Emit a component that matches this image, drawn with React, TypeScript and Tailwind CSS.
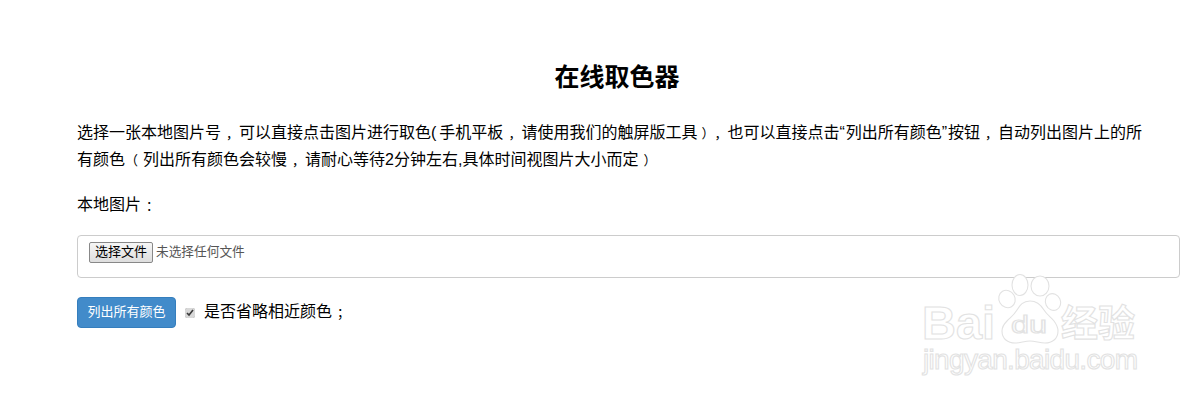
const CJK = "font-['Liberation_Sans','Noto_Sans_CJK_SC',sans-serif]";

// the original's punctuation sits mid-cell, so give each mark its own padded box
function Punct({ children, className }: { children: string; className: string }) {
  return <span className={`inline-block text-[13px] leading-[13px] ${className}`}>{children}</span>;
}

function Comma() {
  return <Punct className="w-[18px] pl-[5px]">，</Punct>;
}

function Watermark() {
  return (
    <svg
      className="absolute left-[900px] top-[260px]"
      width="304"
      height="143"
      viewBox="0 0 304 143"
      fill="#fff"
      stroke="#e2e2e2"
      strokeWidth="1.1"
    >
      <ellipse cx="120" cy="25" rx="8" ry="10.5" />
      <ellipse cx="140" cy="26" rx="9" ry="10" />
      <ellipse cx="107" cy="39" rx="8" ry="9" transform="rotate(-30 107 39)" />
      <ellipse cx="153" cy="42" rx="7.5" ry="8.5" transform="rotate(-25 153 42)" />
      <path d="M130 41c7 0 11 4 14 9 3 5 7 7 10 11 3 4 4 7 4 10 0 8-6 12-13 12-5 0-10-2-15-2s-10 2-15 2c-7 0-13-4-13-12 0-4 2-7 5-10 4-4 7-6 10-11 3-5 6-9 13-9z" />
      <text x="22" y="79" fontSize="47" fontWeight="700" fontFamily="Liberation Sans, sans-serif">Bai</text>
      <text x="111" y="73" fontSize="23" textLength="36" lengthAdjust="spacingAndGlyphs" fontFamily="Liberation Sans, sans-serif">du</text>
      <text x="161" y="77" fontSize="37" fontWeight="700" fontFamily="Noto Sans CJK SC, sans-serif">经验</text>
      <text x="23" y="109" fontSize="28" textLength="215" fontFamily="Liberation Sans, sans-serif">jingyan.baidu.com</text>
    </svg>
  );
}

export default function App() {
  return (
    <div className={`relative h-[403px] w-[1204px] overflow-hidden bg-white pl-[77px] pr-[24px] pt-[60px] text-[16px] text-black ${CJK}`}>
      <h1 className="w-[1080px] text-center text-[25px] leading-[34px] font-bold">在线取色器</h1>
      <p className="mt-[25px] w-[1080px] leading-[27px]">
        选择一张本地图片号<Comma />可以直接点击图片进行取色<span className="mr-[3px]">(</span>手机平板<Comma />请使用我们的触屏版工具
        <Punct className="w-[17px] pl-[4px]">）</Punct><Punct className="w-[13px]">，</Punct>也可以直接点击<span className="mr-[1px]">“</span>列出所有颜色<span className="mr-[1px]">”</span>按钮<Comma />自动列出图片上的所有颜色
        <Punct className="w-[18px]">（</Punct>列出所有颜色会较慢<Comma />请耐心等待2分钟左右,具体时间视图片大小而定
        <Punct className="w-[18px] pl-[5px]">）</Punct>
      </p>
      <p className="mt-[18px] leading-[27px]">
        本地图片<Punct className="w-[18px] pl-[5px]">：</Punct>
      </p>
      <div className="mt-[17px] flex h-[43px] items-start rounded border border-[#ccc] pl-[11px] pt-[6px]">
        <button
          type="button"
          className="h-[21px] w-[64px] rounded-[2px] border border-[#888] bg-gradient-to-b from-[#f6f6f6] to-[#dedede] pb-[1px] text-[13px] leading-[18px] text-black"
        >
          选择文件
        </button>
        <span className="ml-[3px] mt-[1px] text-[12.7px] leading-[19px] text-[#555]">未选择任何文件</span>
      </div>
      <div className="mt-[19px] flex items-center">
        <button
          type="button"
          className="h-[31px] w-[99px] rounded border border-[#357ebd] bg-[#428bca] pb-[2px] text-[13px] text-white"
        >
          列出所有颜色
        </button>
        <input type="checkbox" defaultChecked className="ml-[9px] size-[10px] accent-[#d8d8d8]" />
        <span className="ml-[9px] -mt-[2px] leading-[27px]">
          是否省略相近颜色<Punct className="w-[18px] pl-[5px]">；</Punct>
        </span>
      </div>
      <Watermark />
    </div>
  );
}
